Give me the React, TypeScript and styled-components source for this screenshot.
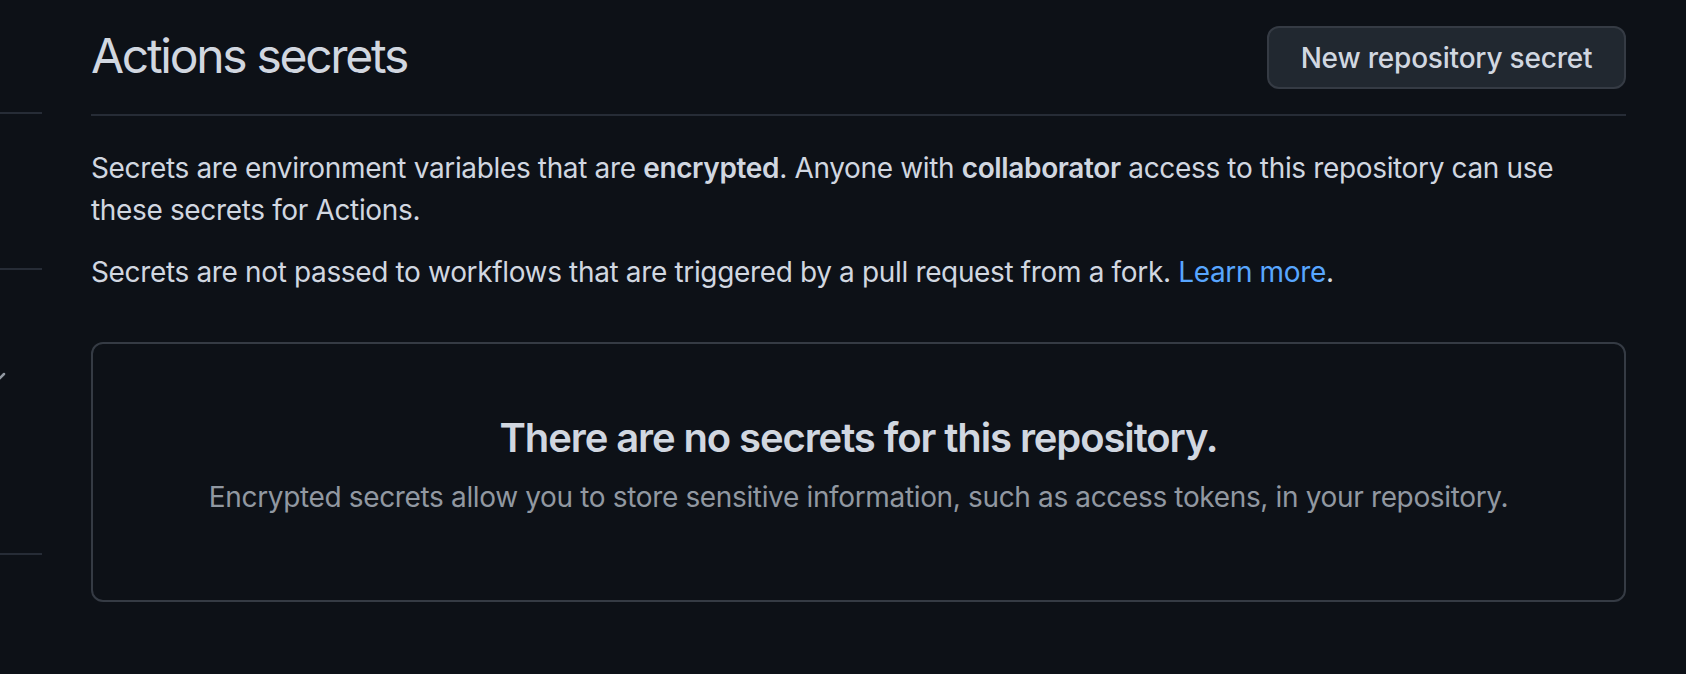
import React from "react";
import styled, { createGlobalStyle } from "styled-components";

const GlobalStyle = createGlobalStyle`
  html, body {
    margin: 0;
    padding: 0;
    background: #0d1117;
  }
  body {
    font-family: Inter, "Noto Sans", "Liberation Sans", sans-serif;
    color: #d1d7e0;
    -webkit-font-smoothing: antialiased;
  }
`;

const Page = styled.div`
  display: grid;
  grid-template-columns: 42px 1535px;
  column-gap: 49px;
  width: 1686px;
  height: 674px;
  overflow: hidden;
  background: #0d1117;
`;

const Sidebar = styled.nav`
  display: flex;
  flex-direction: column;
  overflow: hidden;
`;

const SideItem = styled.div<{ $h: number }>`
  height: ${(p) => p.$h}px;
  border-bottom: 2px solid #262c36;
  display: flex;
  align-items: flex-start;
  justify-content: flex-start;
`;

const Chevron = styled.svg`
  margin-left: -18px;
  margin-top: 100px;
  flex: none;
`;

const Main = styled.main`
  display: flex;
  flex-direction: column;
`;

const Subhead = styled.header`
  display: flex;
  align-items: flex-start;
  justify-content: space-between;
  padding-top: 24px;
  padding-bottom: 25px;
  border-bottom: 2px solid #262c36;
`;

const Title = styled.h2`
  margin: 2px 0 0;
  font-size: 48px;
  line-height: 60px;
  font-weight: 400;
  color: #d1d7e0;
  letter-spacing: -2.3px;
`;

const Button = styled.button`
  margin-top: 2px;
  height: 63px;
  width: 359px;
  box-sizing: border-box;
  background: #212830;
  border: 2px solid #353b44;
  border-radius: 12px;
  color: #d1d7e0;
  font-family: inherit;
  font-size: 28px;
  font-weight: 500;
  letter-spacing: -0.2px;
  padding: 0 30px;
  cursor: pointer;
  white-space: nowrap;
`;

const Para = styled.p<{ $mt: number }>`
  margin: ${(p) => p.$mt}px 0 0;
  font-size: 28px;
  line-height: 41.5px;
  letter-spacing: -0.35px;
  color: #d1d7e0;

  strong {
    font-weight: 600;
  }
`;

const Link = styled.a`
  color: #58a6ff;
  text-decoration: none;
`;

const Blankslate = styled.section`
  margin-top: 48px;
  box-sizing: border-box;
  height: 260px;
  border: 2px solid #353b44;
  border-radius: 12px;
  padding: 64px 32px 0;
  display: flex;
  flex-direction: column;
  align-items: center;
  text-align: center;
`;

const BlankTitle = styled.h3`
  margin: 0;
  font-size: 40px;
  line-height: 60px;
  font-weight: 600;
  letter-spacing: -1.1px;
  color: #d1d7e0;
`;

const BlankText = styled.p`
  margin: 8px 0 0;
  font-size: 28px;
  line-height: 42px;
  letter-spacing: -0.35px;
  color: #9198a1;
`;

export default function App() {
  return (
    <>
      <GlobalStyle />
      <Page>
        <Sidebar>
          <SideItem $h={112} />
          <SideItem $h={154} />
          <SideItem $h={283}>
            <Chevron width="24" height="20" viewBox="0 0 24 20">
              <path
                d="M2 4 L12 14 L22 4"
                fill="none"
                stroke="#9198a1"
                strokeWidth="2.5"
                strokeLinecap="round"
                strokeLinejoin="round"
              />
            </Chevron>
          </SideItem>
        </Sidebar>
        <Main>
          <Subhead>
            <Title>Actions secrets</Title>
            <Button>New repository secret</Button>
          </Subhead>
          <Para $mt={32}>
            Secrets are environment variables that are <strong>encrypted</strong>. Anyone with{" "}
            <strong>collaborator</strong> access to this repository can use these secrets for
            Actions.
          </Para>
          <Para $mt={21}>
            Secrets are not passed to workflows that are triggered by a pull request from a fork.{" "}
            <Link href="#">Learn more</Link>.
          </Para>
          <Blankslate>
            <BlankTitle>There are no secrets for this repository.</BlankTitle>
            <BlankText>
              Encrypted secrets allow you to store sensitive information, such as access tokens, in
              your repository.
            </BlankText>
          </Blankslate>
        </Main>
      </Page>
    </>
  );
}
